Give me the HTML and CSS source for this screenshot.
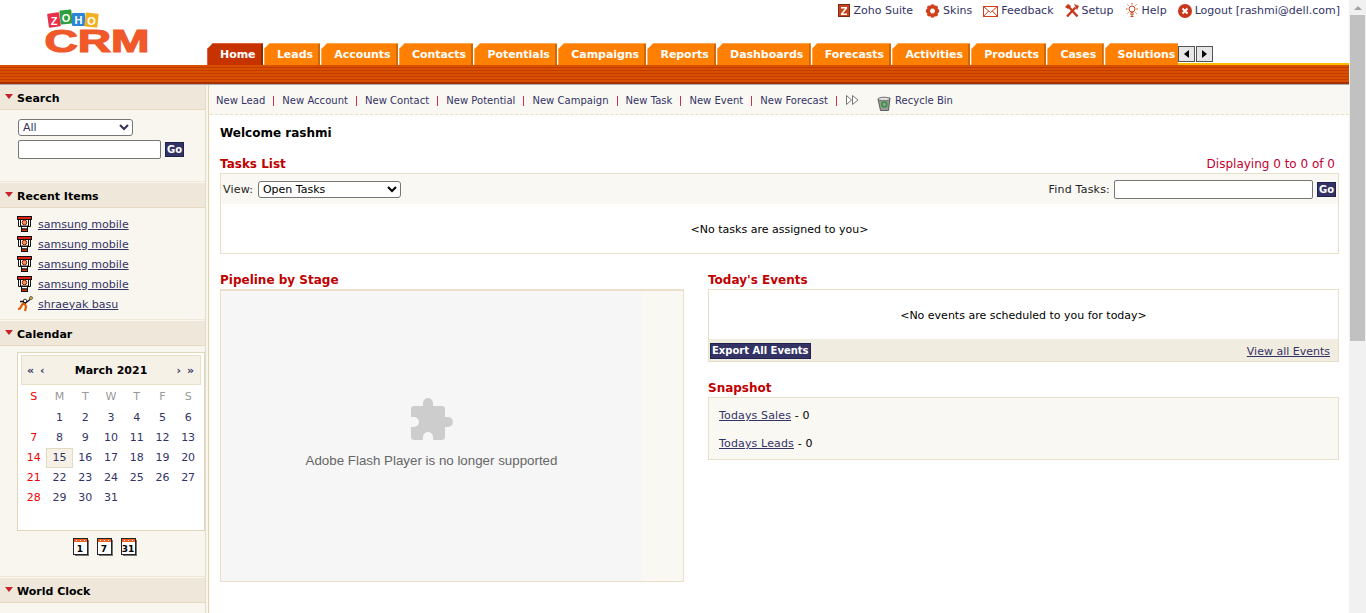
FILE: index.html
```html
<!DOCTYPE html>
<html lang="en">
<head>
<meta charset="utf-8">
<title>Zoho CRM</title>
<link rel="stylesheet" href="styles.css">
</head>
<body>
<svg class="defs" width="0" height="0" aria-hidden="true">
  <defs>
    <symbol id="ic-lead" viewBox="0 0 16 16">
      <path d="M1.500 3.500v7h12v-7" fill="#fff" stroke="#111"/>
      <rect x="0.500" y="0.500" width="14" height="3" fill="#e02010" stroke="#111"/>
      <rect x="3.500" y="3.500" width="8" height="6.500" fill="#fff" stroke="#111"/>
      <circle cx="7.500" cy="6.500" r="2.300" fill="#f09060" stroke="#902000"/>
      <rect x="4.500" y="10.500" width="6" height="2.500" fill="#fff" stroke="#111"/>
      <rect x="4.500" y="13" width="6" height="2.500" fill="#d83000" stroke="#111"/>
    </symbol>
    <symbol id="ic-contact" viewBox="0 0 16 16">
      <circle cx="8" cy="5" r="1.800" fill="#fff" stroke="#111" stroke-width=".8"/>
      <path d="M3 5.500h3l2 2 5-4" stroke="#111" fill="none" stroke-width="1.300"/>
      <path d="M8 8H5.500L3 12.500l-2 .5M8 8l1 3-1 4" stroke="#e85a00" stroke-width="2.200" fill="none"/>
      <circle cx="14" cy="2" r="1.500" fill="#f0c040" stroke="#111" stroke-width=".6"/>
    </symbol>
    <symbol id="ic-cal" viewBox="0 0 16 18">
      <rect x="2" y="2" width="14" height="16" fill="#777"/>
      <rect x="0.500" y="0.500" width="14" height="16" fill="#fff" stroke="#222"/>
      <rect x="1" y="1" width="13" height="3" fill="#f06020"/>
      <rect x="3" y="2" width="1" height="1" fill="#fff"/><rect x="7" y="2" width="1" height="1" fill="#fff"/><rect x="11" y="2" width="1" height="1" fill="#fff"/>
    </symbol>
  </defs>
</svg>
<div class="app">
  <div class="page">
    <header class="header">
      <div class="logo">
        <svg class="logo-svg" width="110" height="50" viewBox="0 0 110 50">
          <g class="logo-z">
            <rect x="3" y="3" width="12" height="14" rx="1" fill="#e8304a" transform="rotate(-8 9 10)"/>
            <text x="9" y="15" fill="#fff">Z</text>
            <rect x="15" y="0" width="12" height="14" rx="1" fill="#2f9e3f" transform="rotate(-6 21 7)"/>
            <text x="21" y="12" fill="#fff">O</text>
            <rect x="27" y="3" width="13" height="13" rx="1" fill="#2b86d8"/>
            <text x="33.500" y="14" fill="#fff">H</text>
            <rect x="40" y="3" width="13" height="14" rx="1" fill="#f0b020" transform="rotate(6 46 10)"/>
            <text x="46.500" y="15" fill="#fff">O</text>
          </g>
          <text x="-0.500" y="42" class="logo-crm" textLength="105" lengthAdjust="spacingAndGlyphs">CRM</text>
        </svg>
      </div>
      <div class="head-right">
        <nav class="toplinks">
          <a class="toplink"><svg class="ti" width="12" height="13" viewBox="0 0 12 13"><rect width="12" height="13" fill="#c8431e"/><rect x=".5" y=".5" width="11" height="12" fill="none" stroke="#7a2a10"/><path d="M3 3h6v1.500L5 9.500h4V11H3V9.500L7 4.500H3z" fill="#fff"/></svg>Zoho Suite</a>
          <a class="toplink"><svg class="ti" width="15" height="14" viewBox="0 0 14 14"><g fill="#d0401a"><circle cx="7" cy="2.500" r="2.300"/><circle cx="7" cy="11.500" r="2.300"/><circle cx="2.500" cy="7" r="2.300"/><circle cx="11.500" cy="7" r="2.300"/><circle cx="3.800" cy="3.800" r="2.300"/><circle cx="10.200" cy="3.800" r="2.300"/><circle cx="3.800" cy="10.200" r="2.300"/><circle cx="10.200" cy="10.200" r="2.300"/></g><circle cx="7" cy="7" r="1.300" fill="#fff"/></svg>Skins</a>
          <a class="toplink"><svg class="ti" width="15" height="12" viewBox="0 0 15 12"><rect x=".5" y="1.500" width="14" height="10" fill="#fff" stroke="#d0401a"/><path d="M.5 1.500l7 6 7-6M.5 11.500l5-5.500M14.500 11.500l-5-5.500" fill="none" stroke="#d0401a"/></svg>Feedback</a>
          <a class="toplink"><svg class="ti" width="14" height="14" viewBox="0 0 14 14"><path d="M2 12.500L10.500 3.500M3 2l9.500 10.500" stroke="#c8371a" stroke-width="2.400"/><path d="M0 3l3-3 3 2-3 3zM9 0l5 2-2 4z" fill="#c8371a"/></svg>Setup</a>
          <a class="toplink"><svg class="ti" width="14" height="15" viewBox="0 0 14 15"><circle cx="7" cy="6" r="3" fill="#fff" stroke="#d0401a"/><path d="M6 9.500h2V12H6zM7 0v1.500M1 6h1.500M11.500 6H13M2.500 1.500l1 1M11.500 1.500l-1 1M2.500 10.500l1-1M11.500 10.500l-1-1M5.500 13.500h3" stroke="#d0401a" fill="none"/></svg>Help</a>
          <a class="toplink"><svg class="ti" width="14" height="14" viewBox="0 0 14 14"><circle cx="7" cy="7" r="7" fill="#c8371a"/><path d="M4.500 4.500l5 5M9.500 4.500l-5 5" stroke="#fff" stroke-width="2"/></svg>Logout [rashmi@dell.com]</a>
        </nav>
        <div class="tabrow">
          <ul class="tabs">
            <li class="tab tab-on">Home</li>
            <li class="tab">Leads</li>
            <li class="tab">Accounts</li>
            <li class="tab">Contacts</li>
            <li class="tab">Potentials</li>
            <li class="tab">Campaigns</li>
            <li class="tab">Reports</li>
            <li class="tab">Dashboards</li>
            <li class="tab">Forecasts</li>
            <li class="tab">Activities</li>
            <li class="tab">Products</li>
            <li class="tab">Cases</li>
            <li class="tab">Solutions</li>
          </ul>
          <div class="tabfill">
            <span class="tabarrow"><i class="arr-l"></i></span>
            <span class="tabarrow"><i class="arr-r"></i></span>
          </div>
        </div>
      </div>
    </header>
    <div class="band"></div>
    <div class="body">
      <aside class="sidebar">
        <section class="side-sec sec-search">
          <h3 class="side-head"><i class="tri"></i>Search</h3>
          <div class="side-search">
            <select class="sel sel-all"><option>All</option></select>
            <div class="search-line"><input class="inp inp-side" type="text"><span class="go">Go</span></div>
          </div>
        </section>
        <section class="side-sec sec-recent">
          <h3 class="side-head"><i class="tri"></i>Recent Items</h3>
          <ul class="recent">
            <li class="recent-row"><svg class="ri" width="16" height="16"><use href="#ic-lead"/></svg><a class="link">samsung mobile</a></li>
            <li class="recent-row"><svg class="ri" width="16" height="16"><use href="#ic-lead"/></svg><a class="link">samsung mobile</a></li>
            <li class="recent-row"><svg class="ri" width="16" height="16"><use href="#ic-lead"/></svg><a class="link">samsung mobile</a></li>
            <li class="recent-row"><svg class="ri" width="16" height="16"><use href="#ic-lead"/></svg><a class="link">samsung mobile</a></li>
            <li class="recent-row"><svg class="ri" width="16" height="16"><use href="#ic-contact"/></svg><a class="link">shraeyak basu</a></li>
          </ul>
        </section>
        <section class="side-sec sec-cal">
          <h3 class="side-head"><i class="tri"></i>Calendar</h3>
          <div class="cal">
            <div class="cal-head">
              <span class="cal-nav">« ‹</span><b class="cal-title">March 2021</b><span class="cal-nav">› »</span>
            </div>
            <div class="cal-grid">
              <span class="dow sun">S</span><span class="dow">M</span><span class="dow">T</span><span class="dow">W</span><span class="dow">T</span><span class="dow">F</span><span class="dow">S</span>
              <span></span><span>1</span><span>2</span><span>3</span><span>4</span><span>5</span><span>6</span>
              <span class="sun">7</span><span>8</span><span>9</span><span>10</span><span>11</span><span>12</span><span>13</span>
              <span class="sun">14</span><span class="today">15</span><span>16</span><span>17</span><span>18</span><span>19</span><span>20</span>
              <span class="sun">21</span><span>22</span><span>23</span><span>24</span><span>25</span><span>26</span><span>27</span>
              <span class="sun">28</span><span>29</span><span>30</span><span>31</span>
            </div>
          </div>
          <div class="cal-views">
            <span class="calv"><svg width="16" height="18"><use href="#ic-cal"/></svg><b class="calv-n">1</b></span>
            <span class="calv"><svg width="16" height="18"><use href="#ic-cal"/></svg><b class="calv-n">7</b></span>
            <span class="calv"><svg width="16" height="18"><use href="#ic-cal"/></svg><b class="calv-n">31</b></span>
          </div>
        </section>
        <section class="side-sec sec-clock">
          <h3 class="side-head"><i class="tri"></i>World Clock</h3>
        </section>
      </aside>
      <div class="side-gap"></div>
      <main class="main">
        <div class="quick">
          <a class="q">New Lead</a><i class="qs"></i>
          <a class="q">New Account</a><i class="qs"></i>
          <a class="q">New Contact</a><i class="qs"></i>
          <a class="q">New Potential</a><i class="qs"></i>
          <a class="q">New Campaign</a><i class="qs"></i>
          <a class="q">New Task</a><i class="qs"></i>
          <a class="q">New Event</a><i class="qs"></i>
          <a class="q">New Forecast</a><i class="qs"></i>
          <svg class="qarrow" width="13" height="10" viewBox="0 0 13 10"><path d="M.5.500l5 4.500-5 4.500zM6.500.500l5.500 4.500-5.500 4.500z" fill="#fff" stroke="#777"/></svg>
          <svg class="qbin" width="14" height="15" viewBox="0 0 14 15"><path d="M1 3l12-1-1.500 12.500h-8z" fill="#9a9a9a" stroke="#444" stroke-width=".8"/><ellipse cx="7" cy="3" rx="6" ry="1.800" fill="#ddd" stroke="#555" stroke-width=".8"/><circle cx="7.300" cy="8.500" r="2.500" fill="none" stroke="#2a9a3a" stroke-width="1.500"/></svg>
          <a class="q q-bin">Recycle Bin</a>
        </div>
        <div class="content">
          <h1 class="welcome">Welcome rashmi</h1>
          <div class="title-row"><h2 class="sec-title">Tasks List</h2><span class="display">Displaying 0 to 0 of 0</span></div>
          <div class="box tasks">
            <div class="task-bar">
              <label class="lbl">View: <select class="sel sel-view"><option>Open Tasks</option></select></label>
              <div class="find"><span class="lbl">Find Tasks:</span><input class="inp inp-find" type="text"><span class="go">Go</span></div>
            </div>
            <p class="empty empty-tasks">&lt;No tasks are assigned to you&gt;</p>
          </div>
          <div class="cols">
            <div class="col-left">
              <h2 class="sec-title">Pipeline by Stage</h2>
              <div class="pipeline">
                <div class="plugin">
                  <svg class="puzzle" width="42" height="42" viewBox="0 0 42 42"><path fill="#cdcdcd" d="M3 8H12V5a5 5 0 0 1 10 0V8H31a3 3 0 0 1 3 3V19h3a5 5 0 0 1 0 10h-3V39a3 3 0 0 1-3 3H22V39a5 5 0 0 0-10 0V42H3a3 3 0 0 1-3-3V29H3a5 5 0 0 0 0-10H0V11a3 3 0 0 1 3-3z"/></svg>
                  <p class="plugin-msg">Adobe Flash Player is no longer supported</p>
                </div>
              </div>
            </div>
            <div class="col-right">
              <h2 class="sec-title">Today's Events</h2>
              <div class="box events">
                <p class="empty empty-events">&lt;No events are scheduled to you for today&gt;</p>
                <div class="events-bar"><span class="export">Export All Events</span><a class="link">View all Events</a></div>
              </div>
              <h2 class="sec-title snap-title">Snapshot</h2>
              <div class="box snapshot">
                <p class="snap-row"><a class="link">Todays Sales</a> - 0</p>
                <p class="snap-row"><a class="link">Todays Leads</a> - 0</p>
              </div>
            </div>
          </div>
        </div>
      </main>
    </div>
  </div>
  <div class="scrollbar">
    <span class="sb-up"></span>
    <span class="sb-thumb"></span>
    <span class="sb-down"></span>
  </div>
</div>
</body>
</html>
```
FILE: styles.css
```css
* { box-sizing: border-box; }
html, body { margin: 0; height: 100%; overflow: hidden; }
body { font-family: "DejaVu Sans", Verdana, sans-serif; font-size: 11px; color: #000; background: #fff; }
.defs { position: absolute; }
h1, h2, h3, p, ul { margin: 0; padding: 0; }
ul { list-style: none; }
.app { display: flex; height: 613px; }
.page { flex: 1; min-width: 0; display: flex; flex-direction: column; overflow: hidden; }

.header { display: flex; height: 65px; flex: none; }
.logo { width: 207px; flex: none; padding: 10px 0 0 45px; }
.logo-svg { display: block; overflow: visible; }
.logo-z { font: 700 11px "Liberation Sans", sans-serif; text-anchor: middle; }
.logo-crm { font: 700 31px "Liberation Sans", sans-serif; fill: #f0592a; stroke: #f0592a; stroke-width: 1.2px; }
.head-right { flex: 1; min-width: 0; display: flex; flex-direction: column; justify-content: space-between; }
.toplinks { display: flex; justify-content: flex-end; gap: 11px; padding: 3px 9px 0 0; }
.toplink { display: flex; align-items: center; gap: 3px; color: #333366; line-height: 14px; }
.toplink:first-child { margin-right: 1px; }
.tabrow { display: flex; height: 22px; }
.tabs { display: flex; gap: 1px; }
.tab { height: 22px; padding: 5px 7.400px 0 13px; font-weight: 700; letter-spacing: -.05px; color: #fff; line-height: 14px; white-space: nowrap; background: #ff7f00; clip-path: polygon(6px 0, 100% 0, 100% 100%, 0 100%, 0 6px); box-shadow: inset 1px 1px 0 #ffa64d, inset -2px 0 0 #c96a10; }
.tab:last-child { padding-right: 3px; box-shadow: inset 1px 1px 0 #ffa64d; }
.tab-on { background: #c63300; box-shadow: inset 1px 1px 0 #e0603a, inset -2px 0 0 #8a2a00; }
.tabfill { flex: 1; display: flex; gap: 1px; padding: 3px 0 0 0; border-bottom: 2px solid #ffc000; }
.tabarrow { width: 17px; height: 16px; display: flex; align-items: center; justify-content: center; background: #e6e6e6; border: 1px solid #555; }
.arr-l { border: 4px solid transparent; border-right: 5px solid #000; border-left: 0; }
.arr-r { border: 4px solid transparent; border-left: 5px solid #000; border-right: 0; }

.band { height: 19px; flex: none; background: repeating-linear-gradient(to bottom, #d94f00 0, #d94f00 2px, #c23c00 2px, #c23c00 3px); border-bottom: 2px solid #a83000; box-shadow: 0 1px 0 #aaa; position: relative; }

.body { flex: 1; min-height: 0; display: flex; }
.sidebar { width: 206px; flex: none; background: #f9f6ef; border-right: 1px solid #e6dcc6; overflow: hidden; }
.side-gap { width: 4px; flex: none; background: #f9f6ef; border-right: 1px solid #f9f7f1; box-shadow: inset -1px 0 0 #e0d4b4; }
.side-sec { border-bottom: 1px solid #eee6d6; }
.side-head { display: flex; align-items: center; height: 25px; padding: 2px 0 0 5px; background: #efe8da; border-bottom: 1px solid #e6d9bd; font-size: 11px; font-weight: 700; color: #000; margin-top: 1px; }
.tri { width: 0; height: 0; border: 4px solid transparent; border-top: 5px solid #c8202a; border-bottom: 0; margin: -4px 4px 0 0; }
.sec-search { height: 97px; }
.side-search { padding: 9px 0 0 18px; display: flex; flex-direction: column; gap: 4px; align-items: flex-start; }
.search-line { display: flex; align-items: center; gap: 4px; }
.sel { font: 11px "DejaVu Sans", sans-serif; height: 17px; border: 1px solid #767676; border-radius: 3px; background: #fff; padding: 0; color: #000; }
.sel-all { width: 115px; color: #335; }
.inp { height: 19px; border: 1px solid #767676; border-radius: 2px; background: #fff; padding: 0 2px; }
.inp-side { width: 143px; }
.go { display: inline-block; width: 19px; height: 15px; background: #333366; color: #fff; font-weight: 700; font-size: 10px; line-height: 14px; text-align: center; border: 1px solid #222250; }
.sec-recent { height: 137px; }
.recent { padding-top: 6px; }
.recent-row { display: flex; align-items: center; gap: 5px; height: 20px; padding-left: 17px; }
.ri { flex: none; }
.link { color: #333366; text-decoration: underline; }

.sec-cal { height: 256px; }
.cal { margin: 6px 0 0 17px; width: 188px; height: 179px; background: #fff; border: 1px solid #e0d5b8; padding: 2px 3px 0; }
.cal-head { display: flex; align-items: center; justify-content: space-between; height: 30px; padding: 0 5px; background: #f5f1e6; border: 1px solid #eadfc9; }
.cal-title { font-size: 11px; color: #000; }
.cal-nav { color: #333366; font-weight: 700; letter-spacing: 1px; }
.cal-grid { display: grid; grid-template-columns: repeat(7, 1fr); grid-template-rows: 21px; grid-auto-rows: 20px; padding-top: 2px; text-align: center; line-height: 20px; color: #333366; }
.dow { color: #999; }
.cal-grid .sun { color: #f00000; }
.today { background: #f5f1e6; border: 1px solid #e4dac4; line-height: 18px; margin: 0 -1px; }
.cal-views { display: flex; justify-content: center; gap: 8px; padding: 7px 0 0 4px; }
.calv { position: relative; display: block; width: 16px; height: 18px; }
.calv-n { position: absolute; left: 0; right: 1px; top: 6px; text-align: center; font-size: 9px; line-height: 10px; color: #000; }
.sec-clock { height: 60px; }

.main { flex: 1; min-width: 0; }
.quick { display: flex; align-items: center; height: 31px; padding: 3px 0 0 6px; background: #faf8f3; border-bottom: 1px dashed #eadfc9; font-size: 10px; }
.q { color: #333366; letter-spacing: .03px; }
.qs { width: 1px; height: 10px; margin: 0 8px; background: #c8305a; }
.qarrow { margin: -2px 0 0 1px; }
.qbin { margin: 5px 4px 0 18px; }
.content { padding: 0 10px; }
.welcome { font-size: 12px; font-weight: 700; line-height: 15px; padding-top: 11px; height: 35px; }
.title-row { display: flex; justify-content: space-between; align-items: center; padding: 4px 4px 0 0; height: 23px; }
.sec-title { font-size: 12px; font-weight: 700; color: #c00000; line-height: 16px; }
.display { font-size: 12px; color: #c00030; }
.box { border: 1px solid #e8dfc8; background: #fff; }
.tasks { height: 81px; }
.task-bar { display: flex; justify-content: space-between; align-items: center; height: 30px; padding: 0 2px; background: #faf8f3; }
.lbl { color: #222; letter-spacing: .2px; }
.sel-view { width: 143px; margin-left: 1px; }
.find { display: flex; align-items: center; gap: 4px; }
.inp-find { width: 199px; }
.find .go { margin-top: 1px; }
.empty { text-align: center; color: #000; }
.empty-tasks { padding-top: 19px; line-height: 14px; }
.cols { display: flex; gap: 24px; padding-top: 18px; }
.col-left { width: 464px; flex: none; }
.col-right { flex: 1; min-width: 0; }
.pipeline { height: 293px; margin-top: 1px; border: 1px solid #ecdfc9; border-top-width: 2px; background: #faf8f3; }
.plugin { width: 421px; height: 290px; background: #f6f6f6; display: flex; flex-direction: column; align-items: center; padding-top: 107px; }
.puzzle { flex: none; }
.plugin-msg { font: 13.330px/16px "Liberation Sans", Arial, sans-serif; color: #666; margin-top: 13px; }
.events { height: 73px; margin-top: 1px; display: flex; flex-direction: column; }
.empty-events { flex: 1; padding-top: 19px; line-height: 14px; }
.events-bar { display: flex; justify-content: space-between; align-items: center; height: 22px; padding: 2px 8px 0 1px; background: #f1ece0; }
.export { background: #333366; color: #fff; font-size: 10px; font-weight: 700; padding: 0 1px; line-height: 14px; border: 1px solid #222250; }
.snap-title { margin-top: 18px; }
.snapshot { height: 63px; margin-top: 1px; background: #faf8f3; padding: 11px 10px 0; }
.snap-row { line-height: 14px; height: 28px; letter-spacing: .15px; }

.scrollbar { width: 17px; flex: none; background: #f1f1f1; display: flex; flex-direction: column; align-items: center; }
.sb-up { width: 0; height: 0; margin: 6px 0 5px; border: 4px solid transparent; border-bottom: 4px solid #a3a3a3; border-top: 0; }
.sb-thumb { width: 15px; height: 326px; background: #c1c1c1; }
.sb-down { flex: 1; }
```
